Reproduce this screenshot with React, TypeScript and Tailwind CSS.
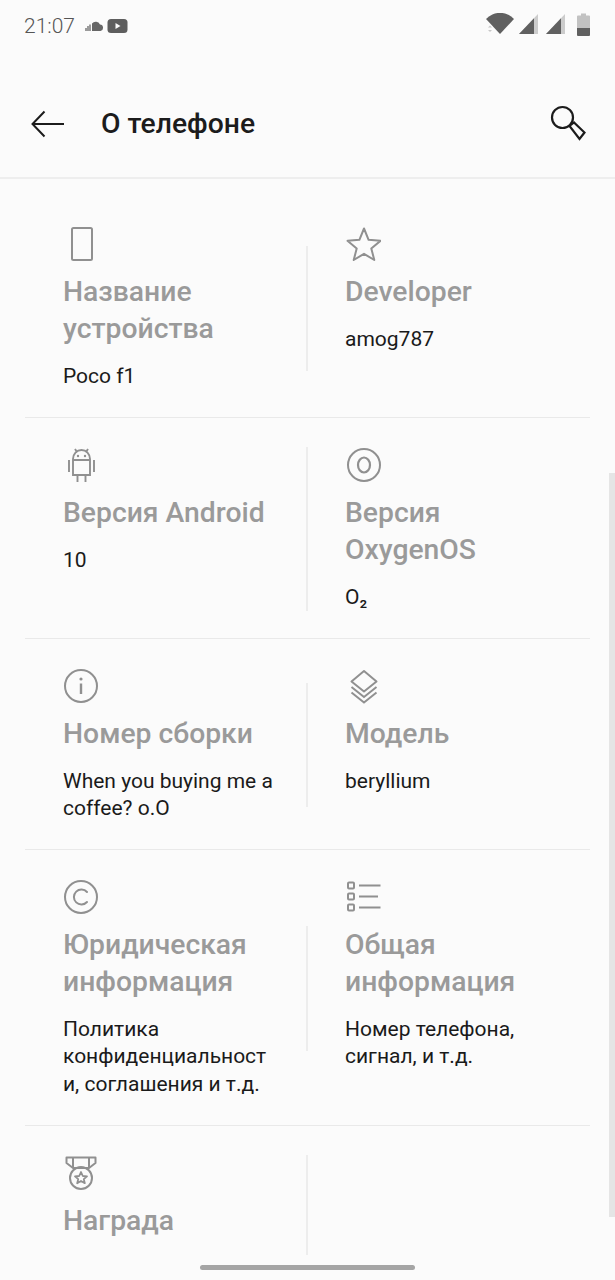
import React from "react";

const s = { fill: "none", stroke: "#909090", strokeWidth: 2 } as const;

const Phone = () => (
  <svg width="36" height="36" viewBox="0 0 36 36"><rect x="9" y="2" width="20" height="32" rx="1.5" {...s} /></svg>
);
const Star = () => (
  <svg width="36" height="36" viewBox="0 0 36 36"><path d="M19 2.5 L23.6 13.8 L35.5 14.8 L26.3 22.6 L29.3 34 L19 27.8 L8.7 34 L11.7 22.6 L2.5 14.8 L14.4 13.8 Z" {...s} strokeLinejoin="round" /></svg>
);
const AndroidIcon = () => (
  <svg width="36" height="36" viewBox="0 0 36 36">
    <path d="M10 12 a8.5 9 0 0 1 17 0 V28 H10 Z M10 13 H27" {...s} strokeWidth={1.9} />
    <path d="M12 2 L14 5 M25 2 L23 5 M6 13 V25 M31 13 V25 M14.5 28 V35 M22.5 28 V35" {...s} strokeWidth={1.9} />
    <circle cx="15" cy="9" r="1.2" fill="#909090" /><circle cx="22" cy="9" r="1.2" fill="#909090" />
  </svg>
);
const OIcon = () => (
  <svg width="36" height="36" viewBox="0 0 36 36"><circle cx="19" cy="18" r="16" {...s} /><ellipse cx="19" cy="18" rx="6" ry="7.5" {...s} strokeWidth={2.2} /></svg>
);
const InfoIcon = () => (
  <svg width="36" height="36" viewBox="0 0 36 36"><circle cx="18" cy="18" r="16" {...s} /><circle cx="18" cy="11" r="1.6" fill="#909090" /><path d="M18 15.5 V26" {...s} strokeWidth={2.4} /></svg>
);
const Layers = () => (
  <svg width="36" height="36" viewBox="0 0 36 36">
    <path d="M19 3 L31.5 13.5 L19 23.5 L6.5 13.5 Z" {...s} strokeLinejoin="round" />
    <path d="M6.5 19 L19 29 L31.5 19 M6.5 24.5 L19 34.5 L31.5 24.5" {...s} />
  </svg>
);
const CopyIcon = () => (
  <svg width="36" height="36" viewBox="0 0 36 36"><circle cx="18" cy="18" r="16" {...s} /><path d="M24 13 A7.5 7.5 0 1 0 24 23" {...s} strokeLinecap="round" /></svg>
);
const ListIcon = () => (
  <svg width="36" height="36" viewBox="0 0 36 36">
    <rect x="3" y="3.5" width="6" height="6" rx="1" {...s} /><rect x="3" y="14.5" width="6" height="6" rx="1" {...s} /><rect x="3" y="25.5" width="6" height="6" rx="1" {...s} />
    <path d="M14 6.5 H35.5 M14 17.5 H33 M14 28.5 H35.5" {...s} />
  </svg>
);
const Medal = () => (
  <svg width="36" height="36" viewBox="0 0 36 36">
    <path d="M3.5 2.5 H32.5 V8 L26 13 H10 L3.5 8 Z M10 3 V13 M26 3 V13" {...s} strokeLinejoin="round" />
    <circle cx="18" cy="23" r="11" {...s} />
    <path d="M18 17 L19.8 21 L24 21.4 L20.8 24.1 L21.8 28.2 L18 26 L14.2 28.2 L15.2 24.1 L12 21.4 L16.2 21 Z" {...s} strokeWidth={1.8} strokeLinejoin="round" />
  </svg>
);

function Cell({ icon, title, sub }: { icon: React.ReactNode; title: string; sub?: string }) {
  return (
    <div className="w-[210px]">
      <div className="h-[36px]">{icon}</div>
      <div className="mt-[11px] text-[28.3px] leading-[37px] font-medium text-[#9a9a9a]">{title}</div>
      {sub && <div className="mt-[16px] text-[21px] leading-[27.5px] text-[#1a1a1a] break-words">{sub}</div>}
    </div>
  );
}

function Row({ a, b, h, last }: { a: React.ReactNode; b?: React.ReactNode; h: number; last?: boolean }) {
  const heights: Record<number, string> = { 125: "h-[125px]", 164: "h-[164px]", 124: "h-[124px]", 100: "h-[100px]" };
  return (
    <div className={`mx-[25px] flex pt-[29px] pb-[26.3px] ${last ? "" : "border-b border-[#e9e9e9]"}`}>
      <div className="w-[281px] shrink-0 pl-[38px]">{a}</div>
      <div className={`w-[2px] shrink-0 self-center bg-[#ededed] ${heights[h]}`} />
      <div className="pl-[37px]">{b}</div>
    </div>
  );
}

export default function App() {
  return (
    <div className="relative h-[1280px] w-[615px] overflow-hidden bg-[#fbfbfb] font-['Roboto',sans-serif]">
      {/* status bar */}
      <div className="flex h-[50px] items-start justify-between pl-[24px] pr-[25px] pt-[13px]">
        <div className="flex items-center">
          <span className="text-[21px] leading-[26px] font-light text-[#555555]">21:07</span>
          <svg className="ml-[10px]" width="19" height="12" viewBox="0 0 19 12">
            <path d="M7 11 V3.5 A4.8 4.8 0 0 1 15 4.5 A3.3 3.3 0 0 1 15.5 11 Z" fill="#666666" />
            <path d="M1 8 V11 M3 6 V11 M5 4.5 V11" stroke="#666666" strokeWidth="1.3" />
          </svg>
          <svg className="ml-[3px]" width="21" height="14" viewBox="0 0 21 14">
            <rect x="0.5" width="20" height="14" rx="3.5" fill="#5e5e5e" />
            <path d="M8.5 4 L13.5 7 L8.5 10 Z" fill="#fbfbfb" />
          </svg>
        </div>
        <div className="flex items-start">
          <svg width="30" height="24" viewBox="0 0 30 24">
            <path d="M1 6 A19 19 0 0 1 29 6 L15 21 Z" fill="#606060" />
            <path d="M3 14.5 L5 12.5 L7 14.5 Z M3 17 L5 19 L7 17 Z" fill="#c8c8c8" />
          </svg>
          <svg className="ml-[3px]" width="21" height="22" viewBox="0 0 21 22">
            <path d="M1 21 L20 1 V21 Z" fill="#cccccc" />
            <path d="M1 21 L16 5.2 V21 Z" fill="#606060" />
          </svg>
          <svg className="ml-[6px]" width="21" height="22" viewBox="0 0 21 22">
            <path d="M1 21 L20 1 V21 Z" fill="#cccccc" />
            <path d="M1 21 L16 5.2 V21 Z" fill="#606060" />
          </svg>
          <svg className="ml-[11px]" width="13" height="24" viewBox="0 0 13 24">
            <path d="M4 0.5 H9 V2.5 H12 A1 1 0 0 1 13 3.5 V15 H0 V3.5 A1 1 0 0 1 1 2.5 H4 Z" fill="#c2c2c2" />
            <path d="M0 15 H13 V22 A1 1 0 0 1 12 23 H1 A1 1 0 0 1 0 22 Z" fill="#606060" />
          </svg>
        </div>
      </div>

      {/* header */}
      <div className="flex h-[129px] items-center justify-between border-b-2 border-[#eeeeee] pl-[31px] pr-[29px] pt-[20px]">
        <div className="flex items-center">
          <svg width="33" height="28" viewBox="0 0 33 28">
            <path d="M33 14 H2 M13.5 1.5 L1.5 14 L13.5 26.5" fill="none" stroke="#1c1c1c" strokeWidth="2" />
          </svg>
          <span className="ml-[37px] text-[28.3px] leading-[37px] font-medium text-[#1c1c1c]">О телефоне</span>
        </div>
        <svg className="mt-[-2px]" width="36" height="36" viewBox="0 0 36 36">
          <circle cx="12.5" cy="12.5" r="10.5" fill="none" stroke="#1c1c1c" strokeWidth="2.2" />
          <path d="M19.5 21 L24 17.5 L34.5 27.5 L29.5 34 Z" fill="#fbfbfb" stroke="#1c1c1c" strokeWidth="2.2" strokeLinejoin="miter" />
        </svg>
      </div>

      {/* list */}
      <div className="pt-[18px]">
        <Row h={125} a={<Cell icon={<Phone />} title="Название устройства" sub="Poco f1" />} b={<Cell icon={<Star />} title="Developer" sub="amog787" />} />
        <Row h={164} a={<Cell icon={<AndroidIcon />} title="Версия Android" sub="10" />} b={<Cell icon={<OIcon />} title="Версия OxygenOS" sub="O₂" />} />
        <Row h={124} a={<Cell icon={<InfoIcon />} title="Номер сборки" sub="When you buying me a coffee? o.O" />} b={<Cell icon={<Layers />} title="Модель" sub="beryllium" />} />
        <Row h={125} a={<Cell icon={<CopyIcon />} title="Юридическая информация" sub="Политика конфиденциальности, соглашения и т.д." />} b={<Cell icon={<ListIcon />} title="Общая информация" sub="Номер телефона, сигнал, и т.д." />} />
        <Row h={100} last a={<Cell icon={<Medal />} title="Награда" />} />
      </div>

      {/* overlays */}
      <div className="absolute right-0 top-[473px] h-[744px] w-[6px] bg-[#e5e5e5]" />
      <div className="absolute left-[200px] top-[1265px] h-[5px] w-[215px] rounded-full bg-[#a5a5a5]" />
    </div>
  );
}
